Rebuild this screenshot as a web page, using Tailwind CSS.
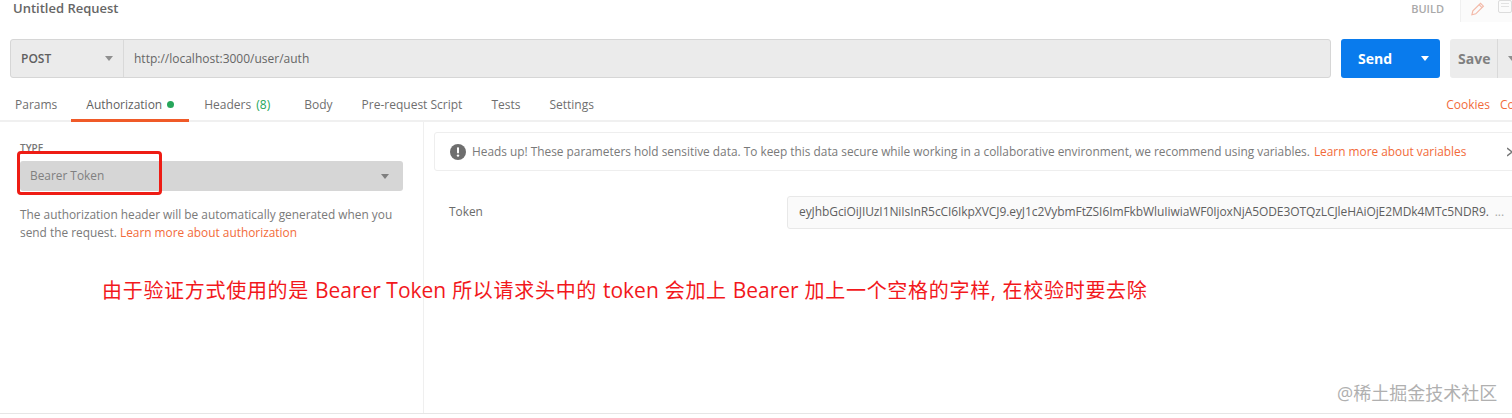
<!DOCTYPE html>
<html lang="en">
<head>
    <meta charset="UTF-8">
    <title>Untitled Request</title>
    <script src="https://cdn.jsdelivr.net/npm/@tailwindcss/browser@4"></script>
</head>
<body class="bg-white">
<div class="relative w-[1512px] h-[418px] overflow-hidden bg-white font-['Open_Sans','Noto_Sans_CJK_SC',sans-serif] text-[12px] text-[#6b6b6b]">

    <!-- Title row -->
    <div class="h-[39px] flex items-start justify-between">
        <div class="pl-[13px] text-[13px] leading-[17px] font-semibold text-[#666]">Untitled Request</div>
        <div class="flex items-start">
            <span class="mt-[2px] text-[11px] leading-[14px] font-semibold text-[#a9a9a9]">BUILD</span>
            <div class="ml-[16px] w-[52px] h-[22px] bg-[#fbfbfb] border-l border-[#f0f0f0] flex pl-[9px] gap-[13px]">
                <svg class="w-[16px] h-[16px] mt-[1px]" viewBox="0 0 16 16" fill="none" stroke="#f3b9a8" stroke-width="1.2"><path d="M2 14l1-4 8-8 3 3-8 8z"/><path d="M9.5 3.5l3 3"/></svg>
                <div class="w-[14px] h-[13px] border border-[#dcdcdc] rounded-[2px] flex flex-col gap-[2px] px-[2px] pt-[2px]">
                    <div class="h-px bg-[#e2e2e2]"></div>
                    <div class="h-px bg-[#e2e2e2]"></div>
                </div>
            </div>
        </div>
    </div>

    <!-- URL row -->
    <div class="flex h-[39px] pl-[10px]">
        <div class="w-[1321px] shrink-0 flex bg-[#ebebeb] border border-[#d6d6d6] rounded-[3px]">
            <div class="w-[113px] flex items-center justify-between pl-[10px] pr-[10px] border-r border-[#d9d9d9]">
                <span class="font-semibold text-[#5f5f5f]">POST</span>
                <svg class="w-[8px] h-[5px]" viewBox="0 0 8 5"><path d="M0 0h8L4 5z" fill="#8f8f8f"/></svg>
            </div>
            <div class="pl-[10px] flex items-center text-[#666]">http://localhost:3000/user/auth</div>
        </div>
        <div class="ml-[10px] w-[99px] shrink-0 flex items-center bg-[#097bed] rounded-[3px] text-white font-bold text-[14px]">
            <span class="ml-[17px]">Send</span>
            <svg class="ml-[29px] w-[8px] h-[5px]" viewBox="0 0 8 5"><path d="M0 0h8L4 5z" fill="#fff"/></svg>
        </div>
        <div class="ml-[10px] flex-1 flex bg-[#ececec] rounded-[3px] font-bold text-[14px] text-[#808080]">
            <span class="w-[48px] pl-[8px] flex items-center border-r border-[#d9d9d9]">Save</span>
            <svg class="ml-[10px] mt-[17px] w-[8px] h-[5px]" viewBox="0 0 8 5"><path d="M0 0h8L4 5z" fill="#8f8f8f"/></svg>
        </div>
    </div>

    <!-- Tabs -->
    <div class="h-[44px] flex items-end justify-between border-b-2 border-[#f0f0f0]">
        <div class="flex h-[24px] pl-[15px] leading-[17px] text-[#6f6f6f]">
            <span class="mr-[14px]">Params</span>
            <div class="relative px-[15px] flex items-start text-[#5f5f5f]">
                <span>Authorization</span>
                <span class="ml-[5px] mt-[5px] w-[7px] h-[7px] rounded-full bg-[#26a65b]"></span>
                <div class="absolute left-0 right-0 bottom-[-2px] h-[3px] bg-[#f05a28]"></div>
            </div>
            <span class="ml-[15px]">Headers <span class="ml-[2px] text-[#26a65b]">(8)</span></span>
            <span class="ml-[34px]">Body</span>
            <span class="ml-[29px]">Pre-request Script</span>
            <span class="ml-[29px]">Tests</span>
            <span class="ml-[29px]">Settings</span>
        </div>
        <div class="flex h-[24px] leading-[17px] text-[#f26b3a]">
            <span>Cookies</span>
            <span class="ml-[10px] w-[12px] overflow-hidden">Code</span>
        </div>
    </div>

    <!-- Content -->
    <div class="flex h-[292px] border-b border-[#e6e6e6] text-[11.87px]">
        <div class="w-[424px] shrink-0 border-r border-[#efefef] pl-[20px] pr-[20px] pt-[20px]">
            <div class="text-[10px] leading-[12px] font-semibold text-[#777]">TYPE</div>
            <div class="mt-[7px] w-[383px] h-[30px] bg-[#d6d6d6] rounded-[3px] flex items-center justify-between pl-[10px] pr-[14px] text-[#808080]">
                <span>Bearer Token</span>
                <svg class="w-[8px] h-[5px]" viewBox="0 0 8 5"><path d="M0 0h8L4 5z" fill="#7f7f7f"/></svg>
            </div>
            <p class="mt-[14px] w-[384px] leading-[18px] text-[#7a7a7a]">The authorization header will be automatically generated when you send the request. <span class="text-[#f26b3a]">Learn more about authorization</span></p>
        </div>
        <div class="flex-1 min-w-0 pl-[10px] pt-[10px]">
            <div class="w-[1100px] h-[39px] border border-[#eeeeee] rounded-[3px] flex items-center pl-[15px]">
                <svg class="w-[16px] h-[16px] shrink-0" viewBox="0 0 16 16"><circle cx="8" cy="8" r="8" fill="#6e6e6e"/><rect x="7" y="3.2" width="2" height="6.2" rx=".8" fill="#fff"/><circle cx="8" cy="11.6" r="1.2" fill="#fff"/></svg>
                <span class="ml-[6px] whitespace-nowrap text-[#7a7a7a]">Heads up! These parameters hold sensitive data. To keep this data secure while working in a collaborative environment, we recommend using variables. <span class="ml-[1px] text-[#f26b3a]">Learn more about variables</span></span>
            </div>
            <div class="flex mt-[25px] items-center">
                <span class="ml-[15px] w-[338px] shrink-0 leading-[16px] mb-[4px] text-[#6b6b6b]">Token</span>
                <div class="w-[740px] h-[33px] shrink-0 bg-[#fafafa] border border-[#e8e8e8] rounded-[3px] flex items-center pl-[11px] pb-[2px] text-[12px] tracking-[-0.08px] text-[#5f5f5f] whitespace-nowrap overflow-hidden">eyJhbGciOiJIUzI1NiIsInR5cCI6IkpXVCJ9.eyJ1c2VybmFtZSI6ImFkbWluIiwiaWF0IjoxNjA5ODE3OTQzLCJleHAiOjE2MDk4MTc5NDR9.<span class="ml-[6px] text-[#aaa]">...</span></div>
            </div>
        </div>
    </div>

    <!-- Alert close arrow, cut by the window edge -->
    <svg class="absolute left-[1507px] top-[147px] w-[6px] h-[10px]" viewBox="0 0 6 10" fill="none" stroke="#777" stroke-width="1.4"><path d="M0 1l5 4-5 4"/></svg>

    <!-- Red annotation drawn over the screenshot -->
    <div class="absolute left-[17px] top-[151px] w-[145px] h-[44px] border-[3px] border-[#ee1c14] rounded-[4px]"></div>
    <div class="absolute left-[102px] top-[277px] whitespace-nowrap text-[20px] leading-[26px] tracking-[0.7px] text-[#f2181c]">由于验证方式使用的是 <span class="text-[21px] tracking-[0px]">Bearer Token</span> 所以请求头中的 <span class="text-[21px] tracking-[0px]">token</span> 会加上 <span class="text-[21px] tracking-[0px]">Bearer</span> 加上一个空格的字样, 在校验时要去除</div>

    <!-- Watermark -->
    <div class="absolute left-[1337px] top-[382px] whitespace-nowrap text-[18px] leading-[22px] text-[#b0b0b0]">@稀土掘金技术社区</div>
</div>
</body>
</html>
